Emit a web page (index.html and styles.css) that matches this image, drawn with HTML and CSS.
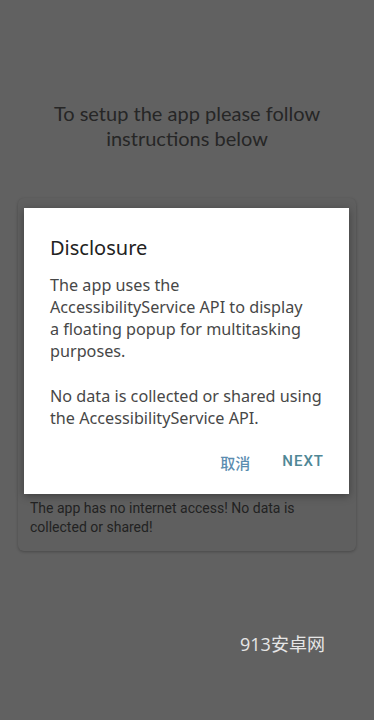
FILE: index.html
```html
<!DOCTYPE html>
<html>
<head>
<meta charset="utf-8">
<link rel="stylesheet" href="styles.css">
</head>
<body>
<div class="screen">
  <h1 class="intro">To setup the app please follow instructions below</h1>
  <div class="card">
    <p class="card-note">The app has no internet access! No data is collected or shared!</p>
  </div>
  <div class="dialog">
    <h2 class="dialog-title">Disclosure</h2>
    <p class="dialog-text">The app uses the AccessibilityService API to display<br>a floating popup for multitasking purposes.</p>
    <p class="dialog-text">No data is collected or shared using the AccessibilityService API.</p>
    <div class="dialog-actions">
      <span class="btn btn-cancel">取消</span>
      <span class="btn">NEXT</span>
    </div>
  </div>
  <div class="watermark">913安卓网</div>
</div>
</body>
</html>
```
FILE: styles.css
```css
html, body {
  margin: 0;
  padding: 0;
  background: #616161;
}
.screen {
  position: relative;
  width: 374px;
  height: 720px;
  overflow: hidden;
  background: #616161;
  font-family: "Noto Sans", Roboto, sans-serif;
}
.intro {
  margin: 0;
  padding: 101px 30px 0;
  font-family: Lato, "Open Sans", sans-serif;
  font-weight: 400;
  font-size: 20px;
  line-height: 25px;
  text-align: center;
  color: #262626;
}
.card {
  margin: 47px 18px 0;
  padding: 301px 12px 14px;
  background: #5f5f5f;
  border-radius: 6px;
  box-shadow: 0 1px 3px rgba(0,0,0,0.25);
}
.card-note {
  margin: 0;
  font-family: Roboto, sans-serif;
  font-size: 14px;
  line-height: 19px;
  color: #222;
}
.dialog {
  position: absolute;
  left: 24px;
  top: 208px;
  width: 325px;
  height: 286px;
  box-sizing: border-box;
  padding: 27px 22px 0 26px;
  background: #fff;
  box-shadow: 0 2px 8px rgba(0,0,0,0.35);
}
.dialog-title {
  margin: 0 0 13px;
  font-size: 20px;
  line-height: 26px;
  font-weight: 400;
  color: #222;
}
.dialog-text {
  margin: 0 0 23px;
  font-size: 16.2px;
  line-height: 22px;
  color: #474747;
}
.dialog-actions {
  display: flex;
  justify-content: flex-end;
  gap: 32px;
  margin-top: 19px;
  padding-right: 3px;
}
.btn {
  font-family: Roboto, sans-serif;
  font-size: 15px;
  font-weight: 500;
  letter-spacing: 1px;
  color: #4f8796;
}
.btn-cancel {
  font-family: "Noto Sans CJK SC", sans-serif;
  letter-spacing: 0;
  color: #5b8db0;
}
.watermark {
  position: absolute;
  left: 240px;
  top: 633px;
  font-size: 18px;
  line-height: 22px;
  color: #e6e6e6;
  font-family: "Open Sans", "Noto Sans CJK SC", sans-serif;
}
```
